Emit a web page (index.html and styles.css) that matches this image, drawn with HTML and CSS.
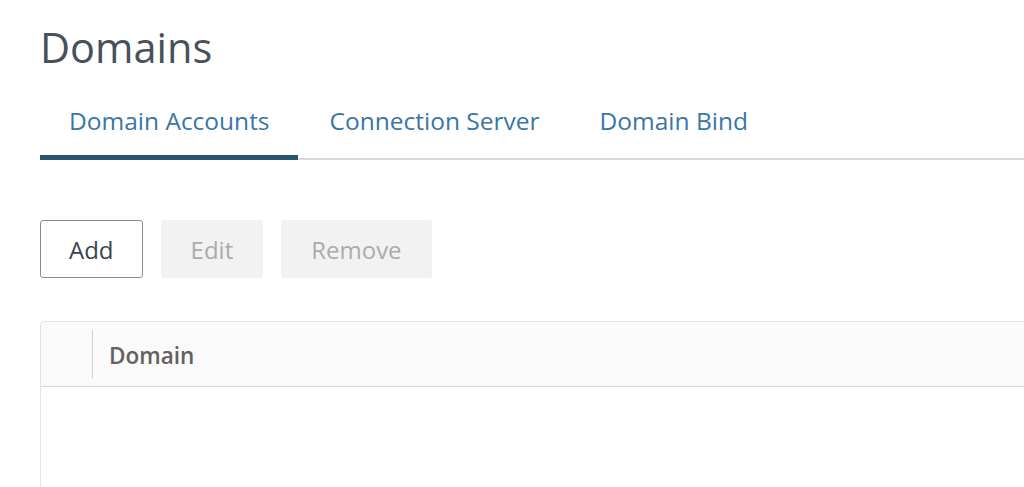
FILE: index.html
```html
<!DOCTYPE html>
<html lang="en">
<head>
<meta charset="utf-8">
<title>Domains</title>
<link rel="stylesheet" href="styles.css">
</head>
<body>
<main class="page">
  <h1 class="title">Domains</h1>
  <nav class="tabs">
    <a class="tab active">Domain Accounts</a>
    <a class="tab">Connection Server</a>
    <a class="tab">Domain Bind</a>
  </nav>
  <div class="toolbar">
    <button class="btn">Add</button>
    <button class="btn disabled">Edit</button>
    <button class="btn disabled">Remove</button>
  </div>
  <div class="grid">
    <div class="grid-head">
      <div class="cell-select"></div>
      <div class="cell-sep"></div>
      <div class="cell-title">Domain</div>
    </div>
    <div class="grid-body"></div>
  </div>
</main>
</body>
</html>
```

FILE: styles.css
```css
html, body {
  margin: 0;
  padding: 0;
  background: #ffffff;
  overflow: hidden;
}
body {
  font-family: "Open Sans", "Liberation Sans", sans-serif;
  width: 1024px;
  height: 487px;
}
.page {
  padding: 22px 0 0 40px;
  width: 1200px;
}
.title {
  margin: 0;
  font-size: 41.5px;
  line-height: 50px;
  font-weight: 400;
  color: #47515b;
}
.tabs {
  margin-top: 33px;
  display: flex;
  border-bottom: 2px solid #d9d9d9;
}
.tab {
  display: block;
  padding: 0 28px 18px 29px;
  font-size: 24.5px;
  line-height: 32px;
  color: #3a76a6;
  border-bottom: 5px solid transparent;
  margin-bottom: -2px;
  margin-right: 3px;
}
.tab.active {
  border-bottom-color: #29566f;
}
.toolbar {
  margin-top: 60px;
  display: flex;
  gap: 18px;
}
.btn {
  height: 58px;
  padding: 0 28px;
  font-family: "Open Sans", "Liberation Sans", sans-serif;
  font-size: 24px;
  color: #3b4350;
  background: #ffffff;
  border: 1px solid #8c8c8c;
  border-radius: 3px;
  display: flex;
  align-items: center;
}
.btn.disabled {
  background: #f2f2f2;
  border-color: #f2f2f2;
  color: #ababab;
  padding: 0 29px;
}
.grid {
  margin-top: 43px;
  border: 1px solid #e3e3e3;
  border-radius: 4px 0 0 0;
  height: 200px;
}
.grid-head {
  display: flex;
  align-items: center;
  height: 64px;
  background: #fafafa;
  border-bottom: 1px solid #d6d6d6;
  border-radius: 4px 0 0 0;
}
.cell-select {
  width: 51px;
}
.cell-sep {
  width: 1px;
  height: 48px;
  background: #cfcfcf;
}
.cell-title {
  padding-left: 16px;
  font-size: 22.5px;
  font-weight: 600;
  color: #616161;
  transform: translateY(1px);
}
.grid-body {
  background: #ffffff;
}
```
